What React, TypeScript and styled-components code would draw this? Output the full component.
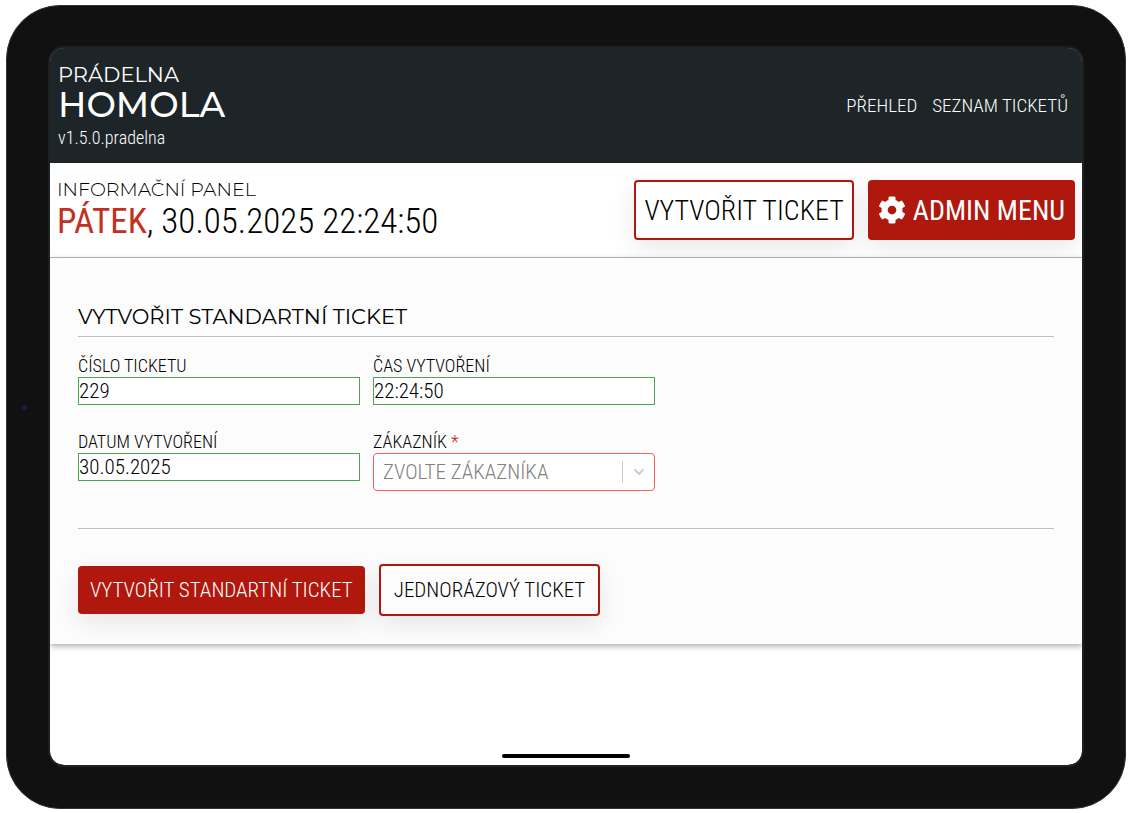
import React, { useState } from "react";
import styled, { createGlobalStyle } from "styled-components";
import { FaCog } from "react-icons/fa";

const condensed = `"Roboto Condensed", "Liberation Sans Narrow", Roboto, sans-serif`;
const wide = `Montserrat, Inter, sans-serif`;
const red = "#b0170d";

const GlobalStyle = createGlobalStyle`
  * { box-sizing: border-box; }
  body { margin: 0; background: #fff; color: #000; font-family: ${condensed}; font-weight: 300; }
  button, input, select { font: inherit; color: inherit; }
`;

const Page = styled.div`
  display: flex;
  min-height: 100vh;
  padding: 5px 3px 4px 6px;
`;

const Tablet = styled.div`
  position: relative;
  display: flex;
  flex: 1;
  padding: 40px 41px 41px;
  background: #111;
  border: 1px solid #2c3539;
  border-radius: 54px;
`;

const Camera = styled.span`
  position: absolute;
  left: 15px;
  top: 50%;
  width: 5px;
  height: 5px;
  margin-top: -2px;
  border-radius: 50%;
  background: #14204a;
`;

const Screen = styled.div`
  position: relative;
  display: flex;
  flex: 1;
  flex-direction: column;
  overflow: hidden;
  background: #fff;
  border: 2px solid #1e2122;
  background-clip: padding-box;
  border-radius: 16px;
`;

const HomeIndicator = styled.span`
  position: absolute;
  left: 50%;
  bottom: 7px;
  width: 128px;
  height: 4px;
  margin-left: -64px;
  border-radius: 2px;
  background: #000;
`;

const TopBar = styled.header`
  display: flex;
  align-items: center;
  justify-content: space-between;
  padding: 12px 14px 12px 8px;
  background: #1d2528;
  color: #fff;
`;

const BrandName = styled.div<{ $large?: boolean }>`
  font-family: ${wide};
  font-size: ${(p) => (p.$large ? "35px" : "21px")};
  line-height: 30px;
  font-weight: ${(p) => (p.$large ? 500 : 400)};
`;

const Version = styled.div`
  margin-top: 4px;
  font-size: 18px;
  line-height: 27px;
`;

const Nav = styled.nav`
  display: flex;
  gap: 15px;
`;

const NavLink = styled.a`
  color: #fff;
  font-size: 19px;
  line-height: 24px;
  text-decoration: none;
`;

const InfoPanel = styled.section`
  display: flex;
  align-items: center;
  justify-content: space-between;
  padding: 15px 7px;
  border-bottom: 1px solid #bfbfbf;
`;

const InfoLabel = styled.div`
  font-family: ${wide};
  font-size: 19px;
  line-height: 24px;
`;

const DateLine = styled.div`
  font-size: 35px;
  line-height: 40px;
`;

const Day = styled.span`
  color: #c4301f;
  font-weight: 400;
`;

const Actions = styled.div<{ $top?: boolean }>`
  display: flex;
  align-items: center;
  gap: 14px;
  margin-top: ${(p) => (p.$top ? "35px" : "0")};
`;

const Button = styled.button<{ $filled?: boolean; $large?: boolean }>`
  display: flex;
  align-items: center;
  gap: 7px;
  height: ${(p) => (p.$large ? "60px" : p.$filled ? "48px" : "52px")};
  padding: 0 ${(p) => (p.$large ? (p.$filled ? "10px" : "8px") : p.$filled ? "12px" : "13px")};
  border: ${(p) => (p.$filled ? "0" : `2px solid ${red}`)};
  border-radius: 4px;
  background: ${(p) => (p.$filled ? red : "transparent")};
  color: ${(p) => (p.$filled ? "#fff" : "#000")};
  box-shadow: 0 8px 24px rgba(0, 0, 0, 0.09);
  font-size: ${(p) => (p.$large ? "28px" : "21px")};
  font-weight: ${(p) => (p.$filled && p.$large ? 400 : 300)};
  white-space: nowrap;
  cursor: pointer;
`;

const TicketForm = styled.form`
  padding: 45px 28px 28px;
  background: #fcfcfc;
  box-shadow: 0 2px 6px rgba(0, 0, 0, 0.35);
`;

const Title = styled.h1`
  margin: 0;
  padding-bottom: 5px;
  border-bottom: 1px solid #bfbfbf;
  font-family: ${wide};
  font-size: 21px;
  line-height: 28px;
  font-weight: 400;
`;

const Fields = styled.div`
  display: grid;
  grid-template-columns: 1fr 1fr;
  align-items: start;
  gap: 26px 13px;
  max-width: 577px;
  padding: 18px 0 37px;
`;

const Field = styled.div`
  display: flex;
  flex-direction: column;
`;

const Label = styled.label`
  font-size: 18px;
  line-height: 22px;
`;

const Required = styled.span`
  color: #c4301f;
`;

const TextInput = styled.input`
  width: 100%;
  height: 28px;
  padding: 0;
  border: 1px solid #4ca64c;
  border-radius: 0;
  background: #fff;
  font-size: 21px;
`;

const SelectBox = styled.div`
  position: relative;
`;

const Select = styled.select`
  width: 100%;
  height: 38px;
  padding: 0 40px 0 9px;
  appearance: none;
  border: 1px solid #ff5c5c;
  border-radius: 4px;
  background: #fff;
  color: #808080;
  font-size: 21px;
`;

const Indicator = styled.span`
  position: absolute;
  top: 8px;
  right: 1px;
  bottom: 8px;
  display: flex;
  align-items: center;
  justify-content: center;
  width: 32px;
  border-left: 1px solid #ccc;
  color: #ccc;
  pointer-events: none;
`;

const Divider = styled.hr`
  margin: 0;
  border: 0;
  border-top: 1px solid #bfbfbf;
`;

function TextField({ id, label, initial }: { id: string; label: string; initial: string }) {
  const [value, setValue] = useState(initial);
  return (
    <Field>
      <Label htmlFor={id}>{label}</Label>
      <TextInput id={id} value={value} onChange={(e) => setValue(e.target.value)} />
    </Field>
  );
}

export default function App() {
  return (
    <Page>
      <GlobalStyle />
      <Tablet>
        <Camera />
        <Screen>
          <TopBar>
            <div>
              <BrandName>PRÁDELNA</BrandName>
              <BrandName $large>HOMOLA</BrandName>
              <Version>v1.5.0.pradelna</Version>
            </div>
            <Nav>
              <NavLink href="#prehled">PŘEHLED</NavLink>
              <NavLink href="#tickety">SEZNAM TICKETŮ</NavLink>
            </Nav>
          </TopBar>
          <InfoPanel>
            <div>
              <InfoLabel>INFORMAČNÍ PANEL</InfoLabel>
              <DateLine>
                <Day>PÁTEK</Day>, 30.05.2025 22:24:50
              </DateLine>
            </div>
            <Actions>
              <Button type="button" $large>VYTVOŘIT TICKET</Button>
              <Button type="button" $large $filled>
                <FaCog size={28} aria-hidden />
                ADMIN MENU
              </Button>
            </Actions>
          </InfoPanel>
          <TicketForm onSubmit={(e) => e.preventDefault()}>
            <Title>VYTVOŘIT STANDARTNÍ TICKET</Title>
            <Fields>
              <TextField id="number" label="ČÍSLO TICKETU" initial="229" />
              <TextField id="time" label="ČAS VYTVOŘENÍ" initial="22:24:50" />
              <TextField id="date" label="DATUM VYTVOŘENÍ" initial="30.05.2025" />
              <Field>
                <Label htmlFor="customer">
                  ZÁKAZNÍK <Required>*</Required>
                </Label>
                <SelectBox>
                  <Select id="customer" defaultValue="">
                    <option value="">ZVOLTE ZÁKAZNÍKA</option>
                  </Select>
                  <Indicator>
                    <svg width="12" height="8" viewBox="0 0 12 8" fill="none" stroke="currentColor" strokeWidth="2" strokeLinecap="round" strokeLinejoin="round">
                      <path d="M2 2l4 4 4-4" />
                    </svg>
                  </Indicator>
                </SelectBox>
              </Field>
            </Fields>
            <Divider />
            <Actions $top>
              <Button type="submit" $filled>VYTVOŘIT STANDARTNÍ TICKET</Button>
              <Button type="button">JEDNORÁZOVÝ TICKET</Button>
            </Actions>
          </TicketForm>
          <HomeIndicator />
        </Screen>
      </Tablet>
    </Page>
  );
}
